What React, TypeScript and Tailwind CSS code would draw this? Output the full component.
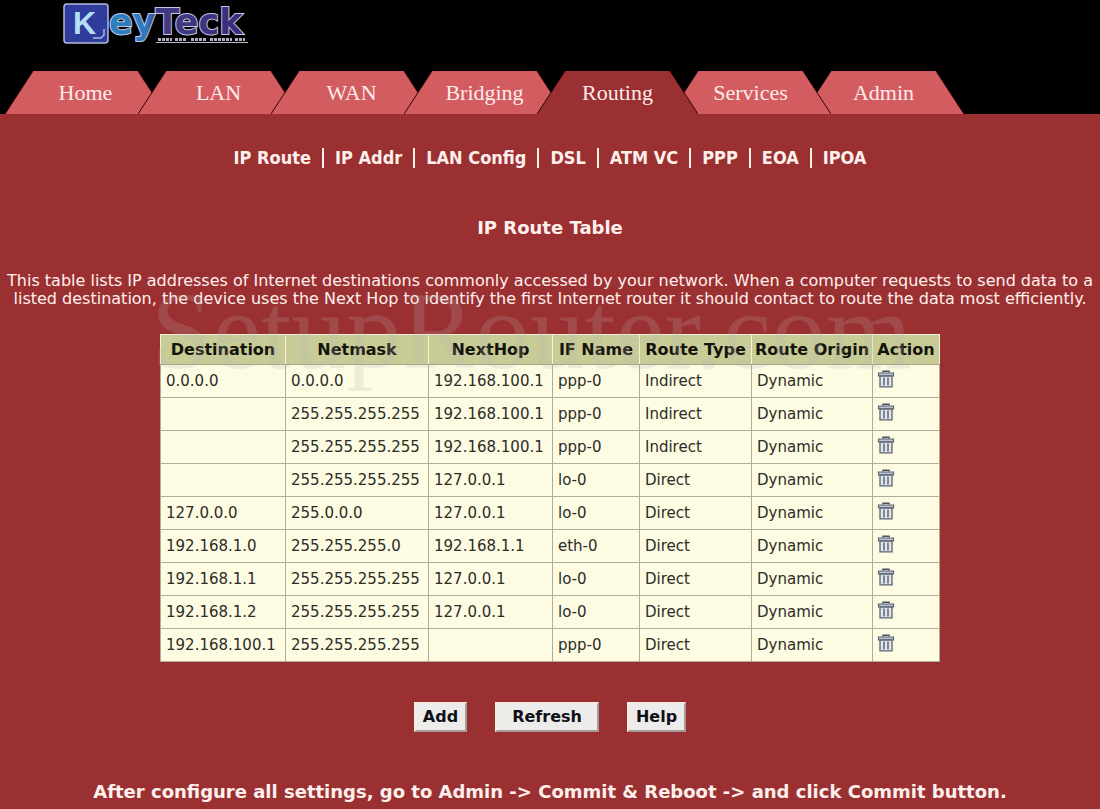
import clsx from 'clsx';

const tabs = ['Home', 'LAN', 'WAN', 'Bridging', 'Routing', 'Services', 'Admin'];
const tabLayers = ['z-0', 'z-10', 'z-20', 'z-30', 'z-40', 'z-20', 'z-10'];
const activeTab = 'Routing';

const subLinks = ['IP Route', 'IP Addr', 'LAN Config', 'DSL', 'ATM VC', 'PPP', 'EOA', 'IPOA'];

const columns = [
  { label: 'Destination', width: 'w-[125px]' },
  { label: 'Netmask', width: 'w-[143px]' },
  { label: 'NextHop', width: 'w-[124px]' },
  { label: 'IF Name', width: 'w-[87px]' },
  { label: 'Route Type', width: 'w-[112px]' },
  { label: 'Route Origin', width: 'w-[121px]' },
  { label: 'Action', width: 'w-[67px]' },
];

const routes = [
  ['0.0.0.0', '0.0.0.0', '192.168.100.1', 'ppp-0', 'Indirect', 'Dynamic'],
  ['', '255.255.255.255', '192.168.100.1', 'ppp-0', 'Indirect', 'Dynamic'],
  ['', '255.255.255.255', '192.168.100.1', 'ppp-0', 'Indirect', 'Dynamic'],
  ['', '255.255.255.255', '127.0.0.1', 'lo-0', 'Direct', 'Dynamic'],
  ['127.0.0.0', '255.0.0.0', '127.0.0.1', 'lo-0', 'Direct', 'Dynamic'],
  ['192.168.1.0', '255.255.255.0', '192.168.1.1', 'eth-0', 'Direct', 'Dynamic'],
  ['192.168.1.1', '255.255.255.255', '127.0.0.1', 'lo-0', 'Direct', 'Dynamic'],
  ['192.168.1.2', '255.255.255.255', '127.0.0.1', 'lo-0', 'Direct', 'Dynamic'],
  ['192.168.100.1', '255.255.255.255', '', 'ppp-0', 'Direct', 'Dynamic'],
];

function Logo() {
  return (
    <svg width="190" height="46" viewBox="0 0 190 46" role="img" aria-label="KeyTeck">
      <defs>
        <linearGradient id="word" x1="0" x2="1">
          <stop offset="0" stopColor="#2a80c0" />
          <stop offset="0.28" stopColor="#3278bc" />
          <stop offset="0.36" stopColor="#403c84" />
          <stop offset="1" stopColor="#3a2c7c" />
        </linearGradient>
      </defs>
      <rect x="2" y="4" width="44" height="39" rx="3" fill="#2f3c9c" stroke="#b4b8dc" strokeWidth="1.5" />
      <path d="M42 29v6l-3 3h-8" fill="none" stroke="#a8b8e8" strokeWidth="1.5" />
      <text x="11" y="34" fontSize="32" fontWeight="700" fontFamily="'Liberation Sans', sans-serif" fill="#b4e0f4">
        K
      </text>
      <text
        x="47"
        y="34"
        fontSize="35"
        fontWeight="700"
        fontFamily="'DejaVu Sans', sans-serif"
        fill="url(#word)"
        stroke="#c4c8e4"
        strokeWidth="2"
        paintOrder="stroke"
      >
        eyTeck
      </text>
      <path d="M94 42.500h92" stroke="#b8b8c8" strokeWidth="1" />
      <path d="M96 39.500h14m3 0h12m4 0h15m4 0h22m3 0h10" stroke="#b0b0c0" strokeWidth="3" strokeDasharray="3 1" />
    </svg>
  );
}

function Tab({ label, layer }: { label: string; layer: string }) {
  const active = label === activeTab;
  return (
    <a
      href="#"
      className={clsx(
        'relative -mr-7 flex h-[43px] w-[161px] items-center justify-center text-[22px] leading-6 text-[#ffeaea]',
        layer,
      )}
    >
      <svg className="absolute inset-0 -z-10" width="161" height="43" viewBox="0 0 161 43" aria-hidden="true">
        <path d="M0 43L28 0H133L161 43Z" fill={active ? '#9b3033' : '#d25c60'} />
        <path d="M0 43L28 0M133 0L161 43" stroke="#2a0508" strokeWidth="1" />
      </svg>
      {label}
    </a>
  );
}

function TrashIcon() {
  return (
    <svg width="18" height="18" viewBox="0 0 18 18" fill="none" aria-hidden="true">
      <path d="M6 2.500V1.200h6v1.300" stroke="#4b5360" strokeWidth="1.500" />
      <path d="M1.500 3h15v3h-15z" fill="#b9c3d2" stroke="#5a6472" strokeWidth="1.200" />
      <path d="M3 6h12v10.800H3z" fill="#e2e6ea" stroke="#5a6472" strokeWidth="1.300" />
      <path d="M7 7.500v8M11 7.500v8" stroke="#5c6778" strokeWidth="1.500" />
    </svg>
  );
}

function ActionButton({ label, wide }: { label: string; wide?: boolean }) {
  return (
    <button
      type="button"
      className={clsx(
        'h-[30px] border-2 border-t-[#f8ece4] border-r-[#a49c98] border-b-[#a49c98] border-l-[#f8ece4] bg-[#ececea] text-base leading-5 font-bold text-[#101018]',
        wide ? 'px-[15px]' : 'px-[7px]',
      )}
    >
      {label}
    </button>
  );
}

export default function App() {
  return (
    <div className="min-h-screen bg-[#9b3033] font-['DejaVu_Sans',Verdana,sans-serif] text-[#fff0ec]">
      <header className="bg-black">
        <div className="h-[71px] pl-[62px]">
          <Logo />
        </div>
        <nav className="flex pl-[5px] font-['Liberation_Serif',serif]">
          {tabs.map((label, i) => (
            <Tab key={label} label={label} layer={tabLayers[i]} />
          ))}
        </nav>
      </header>

      <main className="flex flex-col items-center">
        <nav className="mt-8 flex items-center font-['DejaVu_Sans_Condensed','DejaVu_Sans',sans-serif] text-lg leading-6 font-bold">
          {subLinks.map((label, i) => (
            <div key={label} className="flex items-center">
              {i > 0 && <span className="mx-[11px] h-5 w-[2px] bg-[#fff0ec]" />}
              <a href="#">{label}</a>
            </div>
          ))}
        </nav>

        <h1 className="mt-[46px] text-lg leading-6 font-bold">IP Route Table</h1>

        <p className="mt-8 px-1 text-center text-base leading-[18px]">
          This table lists IP addresses of Internet destinations commonly accessed by your network. When a computer
          requests to send data to a listed destination, the device uses the Next Hop to identify the first Internet
          router it should contact to route the data most efficiently.
        </p>

        <div className="relative mt-[26px]">
          <table className="table-fixed border-collapse text-[15px] leading-5 text-[#2c2c28]">
            <thead>
              <tr className="h-[30px] bg-[#c9cb96] text-base leading-5 text-[#14140c]">
                {columns.map((col) => (
                  <th
                    key={col.label}
                    className={clsx('border border-[#f4f0d8] border-b-[#a8a488] p-0 font-bold', col.width)}
                  >
                    {col.label}
                  </th>
                ))}
              </tr>
            </thead>
            <tbody>
              {routes.map((row, i) => (
                <tr key={i} className="h-[33px] bg-[#fdfbe2]">
                  {row.map((cell, j) => (
                    <td key={j} className="border border-[#b0ac9c] px-[5px] py-0">
                      {cell}
                    </td>
                  ))}
                  <td className="border border-[#b0ac9c] px-1 pt-0 pb-1">
                    <button type="button" aria-label="Delete route" className="block">
                      <TrashIcon />
                    </button>
                  </td>
                </tr>
              ))}
            </tbody>
          </table>
          <div
            aria-hidden="true"
            className="pointer-events-none absolute -top-[66px] -left-[9px] font-['Liberation_Serif',serif] text-[110px] leading-[126px] text-[#b4b4b4]/20"
          >
            SetupRouter.com
          </div>
        </div>

        <div className="mt-10 flex gap-7">
          <ActionButton label="Add" />
          <ActionButton label="Refresh" wide />
          <ActionButton label="Help" />
        </div>

        <p className="mt-12 text-center text-lg leading-6 font-bold">
          After configure all settings, go to Admin -&gt; Commit &amp; Reboot -&gt; and click Commit button.
        </p>
      </main>
    </div>
  );
}
